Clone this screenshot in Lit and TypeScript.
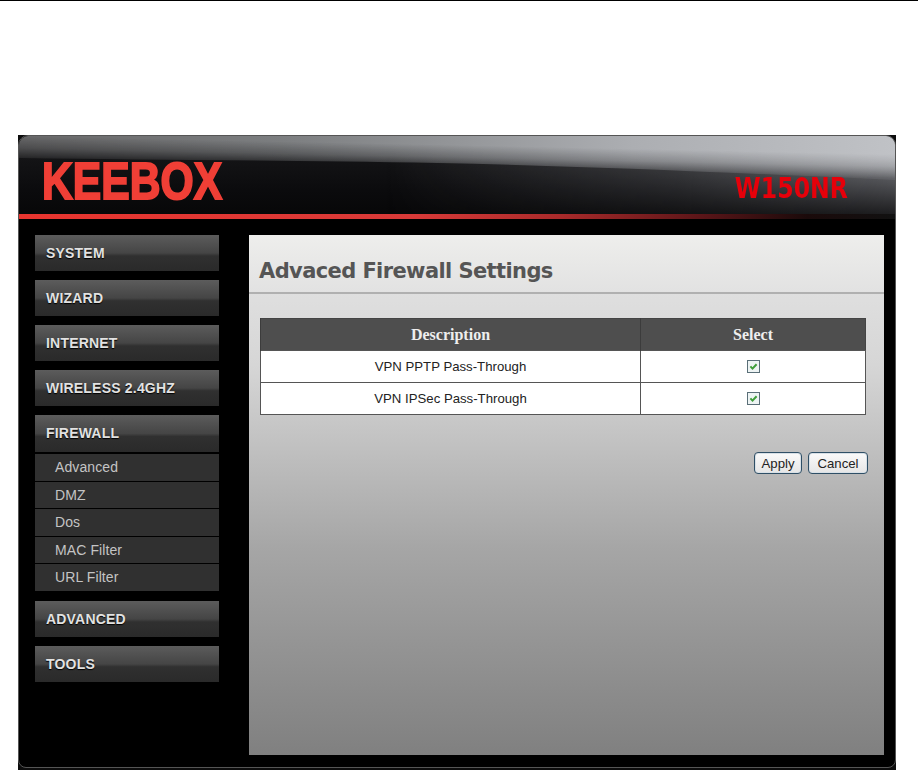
import { LitElement, html, css, svg } from "lit";
import { customElement } from "lit/decorators.js";

const topItems = ["SYSTEM", "WIZARD", "INTERNET", "WIRELESS 2.4GHZ"];
const subItems = ["Advanced", "DMZ", "Dos", "MAC Filter", "URL Filter"];
const rows = ["VPN PPTP Pass-Through", "VPN IPSec Pass-Through"];

const gloss = svg`<svg class="gloss" viewBox="0 0 878 78" preserveAspectRatio="none" aria-hidden="true">
  <defs>
    <linearGradient id="sw" x1="0" y1="0" x2="1" y2="0">
      <stop offset="0" stop-color="#686869"/>
      <stop offset="0.3" stop-color="#7c7e80"/>
      <stop offset="0.7" stop-color="#acaeb2"/>
      <stop offset="1" stop-color="#c0c2c6"/>
    </linearGradient>
    <linearGradient id="fade" gradientUnits="userSpaceOnUse" x1="0" y1="0" x2="-0.5" y2="24">
      <stop offset="0" stop-color="#fff"/>
      <stop offset="0.5" stop-color="#a8a8a8"/>
      <stop offset="1" stop-color="#1c1c1c"/>
    </linearGradient>
    <mask id="m"><rect width="878" height="78" fill="url(#fade)"/></mask>
    <linearGradient id="right" x1="0" y1="0" x2="0" y2="1">
      <stop offset="0.3" stop-color="#76777b"/>
      <stop offset="0.6" stop-color="#505155"/>
      <stop offset="1" stop-color="#1e1e20"/>
    </linearGradient>
    <linearGradient id="rfade" x1="0" y1="0" x2="1" y2="0">
      <stop offset="0.42" stop-color="#000"/>
      <stop offset="0.75" stop-color="#777"/>
      <stop offset="1" stop-color="#fff"/>
    </linearGradient>
    <mask id="rm"><rect width="878" height="78" fill="url(#rfade)"/></mask>
  </defs>
  <rect width="878" height="78" fill="url(#right)" mask="url(#rm)"/>
  <path d="M0 0H878V44C700 36 560 30 420 27C260 24 120 24 0 22Z" fill="url(#sw)" mask="url(#m)"/>
</svg>`;

@customElement("app-root")
export class AppRoot extends LitElement {
  static styles = css`
    :host {
      display: block;
      width: 918px;
      height: 770px;
      background: #fff;
      font-family: "Liberation Sans", Arial, sans-serif;
      overflow: hidden;
    }
    .rule {
      height: 1px;
      background: #000;
    }
    .page {
      padding: 134px 22px 0 18px;
    }
    .frame {
      height: 635px;
      box-sizing: border-box;
      padding-bottom: 2px;
      background: #0c0c0c;
    }
    .shell {
      height: 100%;
      box-sizing: border-box;
      background: #000;
      border: 1px solid #555;
      border-radius: 10px 10px 8px 8px;
      overflow: hidden;
      display: flex;
      flex-direction: column;
    }
    .header {
      height: 78px;
      flex: none;
      position: relative;
      background: linear-gradient(#1a1a1c, #0b0b0d 70%, #070708);
      display: flex;
      align-items: center;
      justify-content: space-between;
      overflow: hidden;
    }
    .gloss {
      position: absolute;
      inset: 0;
      width: 100%;
      height: 100%;
    }
    .logo {
      position: relative;
      margin: 12px 0 0 23px;
      font: 700 52px/1 "Liberation Sans", Arial, sans-serif;
      color: #f03f36;
      -webkit-text-stroke: 2px #f03f36;
      transform: scaleX(0.82);
      transform-origin: left center;
    }
    .model {
      position: relative;
      margin: 30px 47px 0 0;
      font: 700 23.6px/1 "DejaVu Sans", sans-serif;
      color: #e6000a;
      transform: scaleY(1.18);
    }
    .redline {
      height: 5px;
      flex: none;
      background: linear-gradient(90deg, #e8352f 0%, #d83a38 45%, #a82a2a 62%, #5a1518 78%, #1a0a0a 90%, #111 100%);
    }
    .body {
      flex: 1;
      display: flex;
      gap: 30px;
      padding: 16px 11px 12px 16px;
      min-height: 0;
    }
    .nav {
      width: 184px;
      flex: none;
      display: flex;
      flex-direction: column;
    }
    .btn {
      height: 36px;
      flex: none;
      margin-bottom: 9px;
      padding: 0 0 0 11px;
      box-sizing: border-box;
      background: linear-gradient(#5c5c5c, #454545 50%, #303030 58%, #2a2a2a);
      color: #e2e2e2;
      font-weight: 700;
      font-size: 14px;
      letter-spacing: 0.2px;
      line-height: 36px;
      text-shadow: 0 1px 1px #000;
    }
    .btn.open {
      margin-bottom: 2px;
      height: 37px;
    }
    .sub {
      margin-bottom: 9px;
    }
    .sub div {
      height: 26.5px;
      margin-bottom: 1px;
      background: #303030;
      color: #c4c4c4;
      font-size: 14px;
      letter-spacing: 0.1px;
      line-height: 27px;
      padding-left: 20px;
    }
    .panel {
      flex: 1;
      display: flex;
      flex-direction: column;
      background: linear-gradient(#e6e6e6 0, #d6d6d6 25%, #a6a6a6 60%, #808080 100%);
    }
    .title {
      height: 59px;
      box-sizing: border-box;
      flex: none;
      background: linear-gradient(#eeeeec, #e2e2e2);
      border-bottom: 2px solid #b0b0b0;
      padding: 24px 0 0 10px;
      font: 700 21px/24px "DejaVu Sans", sans-serif;
      letter-spacing: -0.6px;
      color: #555;
    }
    .content {
      padding: 24px 18px 0 11px;
    }
    table {
      width: 606px;
      border-collapse: collapse;
      background: #fff;
      border: 1px solid #444;
    }
    th {
      height: 31px;
      padding: 0;
      background: #4e4e4e;
      color: #eee;
      font: 700 16px "Liberation Serif", serif;
      border-left: 1px solid #3c3c3c;
    }
    td {
      height: 31px;
      padding: 0;
      text-align: center;
      font-size: 13.2px;
      color: #222;
      border: 1px solid #555;
    }
    .col1 {
      width: 379px;
    }
    .check {
      display: block;
      width: 13px;
      height: 13px;
      margin: 0 auto;
    }
    .actions {
      display: flex;
      justify-content: flex-end;
      gap: 6px;
      margin-top: 37px;
      margin-right: -2px;
    }
    button {
      height: 22px;
      padding: 0;
      border: 1px solid #2f4f66;
      border-radius: 4px;
      background: linear-gradient(#fafafa, #e6e6e6);
      color: #222;
      font: 13.2px "Liberation Sans", Arial, sans-serif;
      box-shadow: inset 0 0 0 1px #d8e0e6;
    }
    .apply {
      width: 48px;
    }
    .cancel {
      width: 60px;
    }
  `;

  render() {
    return html`
      <div class="rule"></div>
      <div class="page">
        <div class="frame">
          <div class="shell">
            <div class="header">
              ${gloss}
              <div class="logo">KEEBOX</div>
              <div class="model">W150NR</div>
            </div>
            <div class="redline"></div>
            <div class="body">
              <nav class="nav">
                ${topItems.map((t) => html`<div class="btn">${t}</div>`)}
                <div class="btn open">FIREWALL</div>
                <div class="sub">${subItems.map((s) => html`<div>${s}</div>`)}</div>
                <div class="btn">ADVANCED</div>
                <div class="btn">TOOLS</div>
              </nav>
              <main class="panel">
                <div class="title">Advaced Firewall Settings</div>
                <div class="content">
                  <table>
                    <thead>
                      <tr><th class="col1">Description</th><th>Select</th></tr>
                    </thead>
                    <tbody>
                      ${rows.map(
                        (r) => html`<tr>
                          <td>${r}</td>
                          <td>
                            <svg class="check" viewBox="0 0 13 13" aria-hidden="true">
                              <rect x="0.5" y="0.5" width="12" height="12" fill="#eef4f4" stroke="#5a6f78"/>
                              <path d="M3.4 6.4L5.5 8.6L9.6 4.2" fill="none" stroke="#3f9e3a" stroke-width="2"/>
                            </svg>
                          </td>
                        </tr>`
                      )}
                    </tbody>
                  </table>
                  <div class="actions">
                    <button class="apply">Apply</button>
                    <button class="cancel">Cancel</button>
                  </div>
                </div>
              </main>
            </div>
          </div>
        </div>
      </div>
    `;
  }
}
